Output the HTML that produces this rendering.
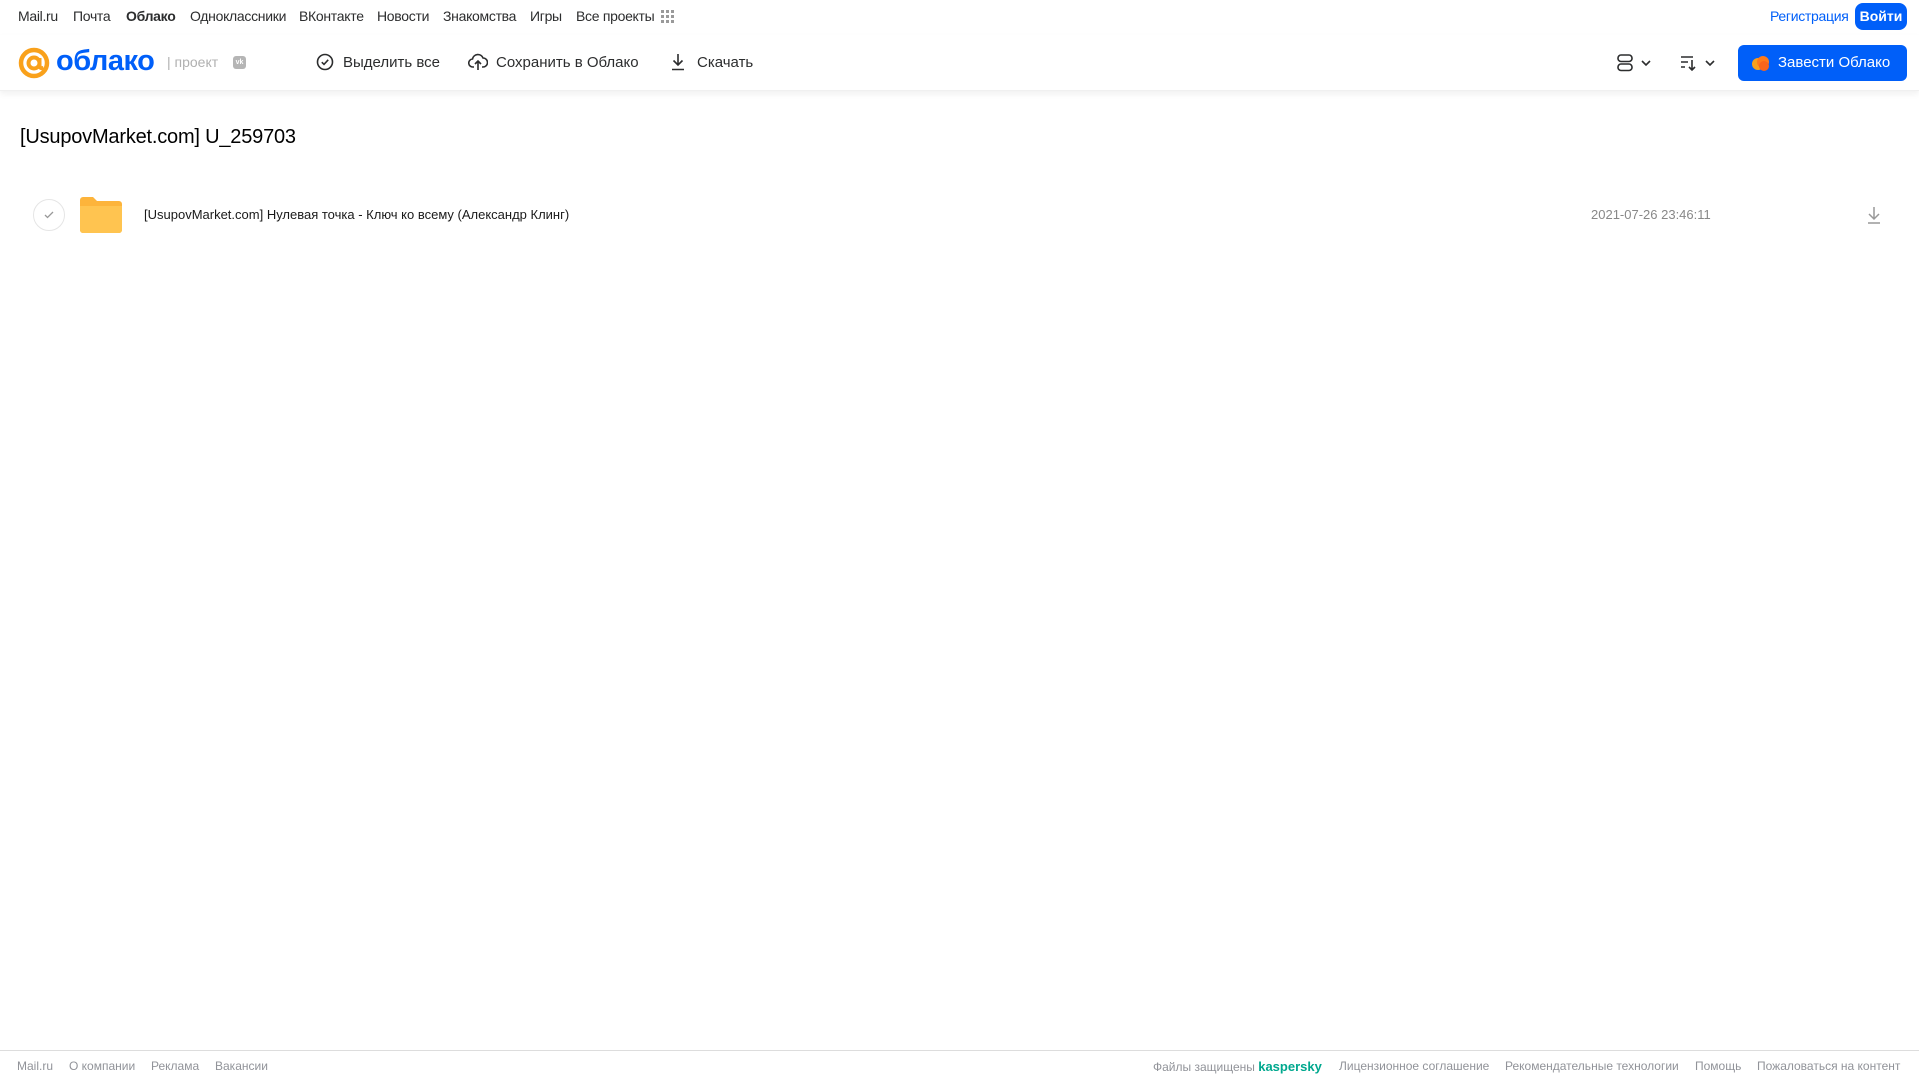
<!DOCTYPE html>
<html><head><meta charset="utf-8"><style>
*{margin:0;padding:0;box-sizing:border-box}
body{width:1919px;height:1079px;background:#fff;font-family:"Liberation Sans",Arial,sans-serif;position:relative;overflow:hidden;color:#333}
.a{position:absolute;white-space:nowrap}
.top{font-size:14px;color:#2c2d2e;top:8px;letter-spacing:-0.3px}
.hdr{position:absolute;left:0;top:35px;width:1919px;height:56px;box-shadow:0 3px 6px rgba(0,0,0,.06);border-bottom:1px solid #f0f0f0}
.tb{font-size:15px;color:#2c2d2e;top:54px}
.ft{font-size:12px;color:#919399;top:1059px}
</style></head><body>
<div class="a top" style="left:18px">Mail.ru</div>
<div class="a top" style="left:73px">Почта</div>
<div class="a top" style="left:126px;font-weight:bold">Облако</div>
<div class="a top" style="left:190px">Одноклассники</div>
<div class="a top" style="left:299px">ВКонтакте</div>
<div class="a top" style="left:377px">Новости</div>
<div class="a top" style="left:443px">Знакомства</div>
<div class="a top" style="left:530px">Игры</div>
<div class="a top" style="left:576px">Все проекты</div>
<svg class="a" style="left:661px;top:10px" width="14" height="14"><g fill="#9a9a9a"><rect x="0" y="0" width="3" height="3"/><rect x="5" y="0" width="3" height="3"/><rect x="10" y="0" width="3" height="3"/><rect x="0" y="5" width="3" height="3"/><rect x="5" y="5" width="3" height="3"/><rect x="10" y="5" width="3" height="3"/><rect x="0" y="10" width="3" height="3"/><rect x="5" y="10" width="3" height="3"/><rect x="10" y="10" width="3" height="3"/></g></svg>
<div class="a top" style="left:1770px;color:#005ff9">Регистрация</div>
<div class="a" style="left:1855px;top:3px;width:52px;height:27px;background:#005ff9;border-radius:8px;color:#fff;font-size:14px;font-weight:bold;text-align:center;line-height:27px">Войти</div>

<div class="hdr"></div>
<svg class="a" style="left:18px;top:47px" width="32" height="32" viewBox="0 0 32 32"><circle cx="16" cy="16" r="13" fill="none" stroke="#f9a11b" stroke-width="4.5"/><circle cx="16" cy="16" r="5.5" fill="none" stroke="#f9a11b" stroke-width="4"/><path d="M21.5 11v7q0 4 4 3" fill="none" stroke="#f9a11b" stroke-width="4"/></svg>
<div class="a" style="left:56px;top:45px;font-size:29px;font-weight:bold;color:#005ff9;letter-spacing:-0.5px">облако</div>
<div class="a" style="left:167px;top:54px;font-size:14px;color:#b0b0b0">| проект</div>
<div class="a" style="left:233px;top:56px;width:13px;height:13px;background:#b5b5b5;border-radius:3px;color:#fff;font-size:7px;text-align:center;line-height:13px;font-weight:bold">vk</div>

<svg class="a" style="left:316px;top:53px" width="18" height="18" viewBox="0 0 18 18"><circle cx="9" cy="9" r="7.5" fill="none" stroke="#2c2d2e" stroke-width="1.6"/><path d="M5.8 9.2l2.2 2.2 4.2-4.6" fill="none" stroke="#2c2d2e" stroke-width="1.6"/></svg>
<div class="a tb" style="left:343px">Выделить все</div>
<svg class="a" style="left:468px;top:53px" width="20" height="18" viewBox="0 0 20 18"><path d="M6 14H5a4 4 0 0 1-.5-8A5.5 5.5 0 0 1 15 5a4 4 0 0 1 0 9h-1" fill="none" stroke="#2c2d2e" stroke-width="1.6"/><path d="M10 17V8M7 11l3-3 3 3" fill="none" stroke="#2c2d2e" stroke-width="1.6"/></svg>
<div class="a tb" style="left:496px">Сохранить в Облако</div>
<svg class="a" style="left:670px;top:53px" width="16" height="18" viewBox="0 0 16 18"><path d="M8 1v11M3.5 7.5L8 12l4.5-4.5M2 16.5h12" fill="none" stroke="#2c2d2e" stroke-width="1.6"/></svg>
<div class="a tb" style="left:697px">Скачать</div>

<svg class="a" style="left:1617px;top:54px" width="40" height="18" viewBox="0 0 40 18"><rect x="1" y="1" width="14" height="6.5" rx="3" fill="none" stroke="#2c2d2e" stroke-width="1.6"/><rect x="1" y="10" width="14" height="6.5" rx="3" fill="none" stroke="#2c2d2e" stroke-width="1.6"/><path d="M25 7l4 4 4-4" fill="none" stroke="#2c2d2e" stroke-width="1.6"/></svg>
<svg class="a" style="left:1680px;top:54px" width="40" height="18" viewBox="0 0 40 18"><path d="M1 3h12M1 8h7M1 13h4M12 6v10M9 13l3 3 3-3" fill="none" stroke="#2c2d2e" stroke-width="1.6"/><path d="M26 7l4 4 4-4" fill="none" stroke="#2c2d2e" stroke-width="1.6"/></svg>
<div class="a" style="left:1738px;top:45px;width:169px;height:36px;background:#005ff9;border-radius:6px"></div>
<svg class="a" style="left:1751px;top:54px" width="20" height="18" viewBox="0 0 20 18"><circle cx="7" cy="10" r="6" fill="#f9a11b"/><circle cx="12" cy="8" r="6" fill="#ff7a1a"/><circle cx="13" cy="12" r="5" fill="#f9651b"/></svg>
<div class="a" style="left:1778px;top:54px;font-size:15px;color:#fff">Завести Облако</div>

<div class="a" style="left:20px;top:126px;font-size:20px;color:#000;letter-spacing:-0.2px">[UsupovMarket.com] U_259703</div>

<div class="a" style="left:33px;top:199px;width:32px;height:32px;border:1px solid #e5e5e5;border-radius:50%"></div>
<svg class="a" style="left:43px;top:210px" width="12" height="10" viewBox="0 0 12 10"><path d="M2 5l2.5 2.5L10 2" fill="none" stroke="#999" stroke-width="1.3"/></svg>
<svg class="a" style="left:80px;top:197px" width="42" height="36" viewBox="0 0 42 36"><path d="M0 3a3 3 0 0 1 3-3h10l4 4h22a3 3 0 0 1 3 3v26a3 3 0 0 1-3 3H3a3 3 0 0 1-3-3z" fill="#fdb43b"/><path d="M0 9h42v24a3 3 0 0 1-3 3H3a3 3 0 0 1-3-3z" fill="#ffc450"/></svg>
<div class="a" style="left:144px;top:207px;font-size:13px;color:#1a1a1a">[UsupovMarket.com] Нулевая точка - Ключ ко всему (Александр Клинг)</div>
<div class="a" style="left:1591px;top:207px;font-size:13px;color:#888">2021-07-26 23:46:11</div>
<svg class="a" style="left:1866px;top:205px" width="16" height="20" viewBox="0 0 16 20"><path d="M8 2v12M3 9l5 5 5-5M2 18h12" fill="none" stroke="#999" stroke-width="1.5"/></svg>

<div class="a" style="left:0;top:1050px;width:1919px;height:1px;background:#ddd"></div>
<div class="a ft" style="left:17px">Mail.ru</div>
<div class="a ft" style="left:69px">О компании</div>
<div class="a ft" style="left:151px">Реклама</div>
<div class="a ft" style="left:215px">Вакансии</div>
<div class="a ft" style="left:1153px">Файлы защищены <b style="color:#00a88e;font-size:13px">kaspersky</b></div>
<div class="a ft" style="left:1339px">Лицензионное соглашение</div>
<div class="a ft" style="left:1505px">Рекомендательные технологии</div>
<div class="a ft" style="left:1695px">Помощь</div>
<div class="a ft" style="left:1757px">Пожаловаться на контент</div>
</body></html>
